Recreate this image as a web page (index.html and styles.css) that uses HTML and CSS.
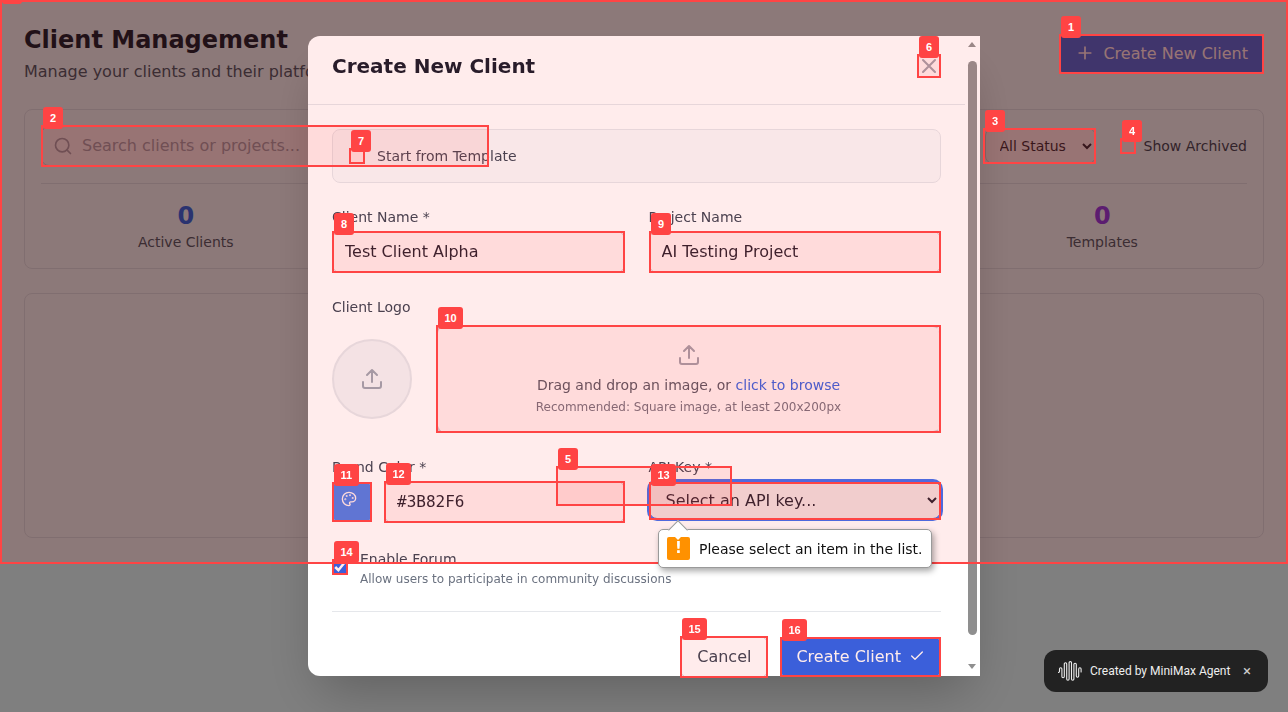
FILE: index.html

```html
<!DOCTYPE html>
<html lang="en">
<head>
  <meta charset="UTF-8">
  <meta name="viewport" content="width=device-width, initial-scale=1.0">
  <title>Client Management</title>
  <link rel="stylesheet" href="styles.css">
</head>
<body>

  <main class="page">
    <header class="page-header">
      <div>
        <h1>Client Management</h1>
        <p class="subtitle">Manage your clients and their platforms</p>
      </div>
      <button class="btn btn-primary">
        <svg class="icon" width="20" height="20" viewBox="0 0 24 24"><path d="M12 5v14M5 12h14"/></svg>
        Create New Client
      </button>
    </header>

    <section class="card">
      <div class="filters">
        <div class="search">
          <svg class="icon search-icon" width="20" height="20" viewBox="0 0 24 24"><circle cx="11" cy="11" r="8"/><path d="M21 21l-4.35-4.35"/></svg>
          <input class="search-input" type="text" placeholder="Search clients or projects...">
        </div>
        <select class="status-select"><option>All Status</option></select>
        <label class="archived"><input class="check" type="checkbox"> Show Archived</label>
      </div>
      <div class="stats">
        <div class="stat"><div class="stat-num blue">0</div><div class="stat-label">Active Clients</div></div>
        <div class="stat"></div>
        <div class="stat"></div>
        <div class="stat"><div class="stat-num purple">0</div><div class="stat-label">Templates</div></div>
      </div>
    </section>

    <section class="card list-card"></section>
  </main>

  <div class="backdrop">
    <div class="modal">
      <div class="modal-content">
        <div class="modal-header">
          <h2>Create New Client</h2>
          <button class="close-btn">
            <svg class="icon" width="24" height="24" viewBox="0 0 24 24"><path d="M18 6L6 18M6 6l12 12"/></svg>
          </button>
        </div>

        <form class="modal-body">
          <label class="template-box"><input class="check" type="checkbox"> Start from Template</label>

          <div class="two-col">
            <div>
              <label class="field-label">Client Name *</label>
              <input class="text-input" type="text" value="Test Client Alpha">
            </div>
            <div>
              <label class="field-label">Project Name</label>
              <input class="text-input" type="text" value="AI Testing Project">
            </div>
          </div>

          <div class="logo-field">
            <label class="field-label">Client Logo</label>
            <div class="logo-row">
              <div class="logo-circle">
                <svg class="icon" width="24" height="24" viewBox="0 0 24 24"><path d="M21 15v4a2 2 0 0 1-2 2H5a2 2 0 0 1-2-2v-4M17 8l-5-5-5 5M12 3v12"/></svg>
              </div>
              <div class="dropzone">
                <svg class="icon" width="24" height="24" viewBox="0 0 24 24"><path d="M21 15v4a2 2 0 0 1-2 2H5a2 2 0 0 1-2-2v-4M17 8l-5-5-5 5M12 3v12"/></svg>
                <p class="drop-text">Drag and drop an image, or <span class="link">click to browse</span></p>
                <p class="drop-hint">Recommended: Square image, at least 200x200px</p>
              </div>
            </div>
          </div>

          <div class="two-col">
            <div>
              <label class="field-label">Brand Color *</label>
              <div class="color-row">
                <div class="swatch">
                  <svg class="icon" width="16" height="16" viewBox="0 0 24 24">
                    <circle cx="13.5" cy="6.5" r=".5"/><circle cx="17.5" cy="10.5" r=".5"/><circle cx="8.5" cy="7.5" r=".5"/><circle cx="6.5" cy="12.5" r=".5"/>
                    <path d="M12 2C6.5 2 2 6.5 2 12s4.5 10 10 10c.926 0 1.648-.746 1.648-1.688 0-.437-.18-.835-.437-1.125-.29-.289-.438-.652-.438-1.125a1.64 1.64 0 0 1 1.668-1.668h1.996c3.051 0 5.555-2.503 5.555-5.554C21.965 6.012 17.461 2 12 2z"/>
                  </svg>
                </div>
                <input class="text-input color-input" type="text" value="#3B82F6">
              </div>
            </div>
            <div>
              <label class="field-label">API Key *</label>
              <select class="api-select"><option>Select an API key...</option></select>
            </div>
          </div>

          <div class="forum-row">
            <input class="check" type="checkbox" checked>
            <div>
              <div class="forum-title">Enable Forum</div>
              <div class="forum-desc">Allow users to participate in community discussions</div>
            </div>
          </div>

          <div class="modal-footer">
            <button class="btn btn-cancel" type="button">Cancel</button>
            <button class="btn btn-create" type="button">
              Create Client
              <svg class="icon" width="16" height="16" viewBox="0 0 24 24"><path d="M20 6L9 17l-5-5"/></svg>
            </button>
          </div>
        </form>
      </div>

      <div class="scrollbar">
        <span class="arrow-up"></span>
        <span class="thumb"></span>
        <span class="arrow-down"></span>
      </div>
    </div>
  </div>

  <!-- numbered boxes drawn over the page -->
  <div class="marks">
    <div class="mark m0"><span class="tag">0</span></div>
    <div class="mark m1"><span class="tag">1</span></div>
    <div class="mark m2"><span class="tag">2</span></div>
    <div class="mark m3"><span class="tag">3</span></div>
    <div class="mark m4"><span class="tag">4</span></div>
    <div class="mark m5"><span class="tag">5</span></div>
    <div class="mark m6"><span class="tag">6</span></div>
    <div class="mark m7"><span class="tag">7</span></div>
    <div class="mark m8"><span class="tag">8</span></div>
    <div class="mark m9"><span class="tag">9</span></div>
    <div class="mark m10"><span class="tag">10</span></div>
    <div class="mark m11"><span class="tag">11</span></div>
    <div class="mark m12"><span class="tag">12</span></div>
    <div class="mark m13"><span class="tag">13</span></div>
    <div class="mark m14"><span class="tag">14</span></div>
    <div class="mark m15"><span class="tag">15</span></div>
    <div class="mark m16"><span class="tag">16</span></div>
  </div>

  <div class="bubble">
    <span class="bubble-icon">!</span>
    Please select an item in the list.
  </div>

  <div class="toast">
    <svg class="wave" width="24" height="20" viewBox="0 0 24 20"><path d="M.3 11.500c.8 0 1.200-.4 1.200-1.200V8a1.200 1.200 0 0 1 2.400 0v7.500a1.200 1.200 0 0 0 2.400 0V3a1.200 1.200 0 0 1 2.400 0v15a1.200 1.200 0 0 0 2.400 0V1.800a1.200 1.200 0 0 1 2.400 0V18a1.200 1.200 0 0 0 2.400 0V3.500a1.200 1.200 0 0 1 2.400 0V15a1.200 1.200 0 0 0 2.400 0V8a1.200 1.200 0 0 1 2.400 0v3"/></svg>
    <span class="toast-text">Created by MiniMax Agent</span>
    <span class="toast-close">&#215;</span>
  </div>

</body>
</html>
```

FILE: styles.css

```css
* {
  box-sizing: border-box;
}
body {
  margin: 0;
  height: 712px;
  overflow: hidden;
  background: #fff;
  font-family: "DejaVu Sans", sans-serif;
  color: #111827;
}
h1, h2, p {
  margin: 0;
}
.icon {
  fill: none;
  stroke: currentColor;
  stroke-width: 2;
  stroke-linecap: round;
  stroke-linejoin: round;
  flex: none;
}
.check {
  width: 16px;
  height: 16px;
  margin: 0;
  flex: none;
  accent-color: #2563eb;
}

/* page behind the modal */
.page {
  padding: 24px;
}
.page-header {
  display: flex;
  justify-content: space-between;
  align-items: center;
  margin-bottom: 25px;
}
h1 {
  font-size: 24px;
  line-height: 32px;
  font-weight: 700;
}
.subtitle {
  margin-top: 4px;
  font-size: 16px;
  line-height: 24px;
  color: #4b5563;
}
.btn {
  display: flex;
  align-items: center;
  gap: 8px;
  height: 40px;
  padding: 0 16px 2px;
  border: none;
  border-radius: 8px;
  font-family: inherit;
  font-size: 16px;
}
.btn-primary {
  background: #2563eb;
  color: #fff;
}
.card {
  border: 1px solid #e5e7eb;
  border-radius: 8px;
  background: #fff;
  padding: 16px;
}
.filters {
  display: flex;
  align-items: center;
  gap: 24px;
  padding-bottom: 17px;
  border-bottom: 1px solid #e5e7eb;
}
.search {
  position: relative;
  width: 448px;
  margin-right: auto;
}
.search-icon {
  position: absolute;
  left: 12px;
  top: 10px;
  color: #9ca3af;
}
.search-input {
  display: block;
  width: 100%;
  height: 40px;
  padding: 0 12px 2px 40px;
  border: 1px solid #d1d5db;
  border-radius: 8px;
  font-family: inherit;
  font-size: 16px;
}
.search-input::placeholder {
  color: #9ca3af;
}
.status-select {
  width: 111px;
  height: 36px;
  padding: 0 8px 0 10px;
  border: 1px solid #d1d5db;
  border-radius: 8px;
  background: #fff;
  font-family: inherit;
  font-size: 14px;
  color: #111827;
}
.archived {
  display: flex;
  align-items: center;
  gap: 8px;
  font-size: 14px;
  color: #374151;
}
.stats {
  display: grid;
  grid-template-columns: repeat(4, 1fr);
  gap: 16px;
  padding-top: 16px;
  text-align: center;
}
.stat-num {
  font-size: 24px;
  line-height: 32px;
  font-weight: 700;
}
.blue {
  color: #2563eb;
}
.purple {
  color: #9333ea;
}
.stat-label {
  font-size: 14px;
  line-height: 20px;
  color: #4b5563;
}
.list-card {
  height: 245px;
  margin-top: 24px;
}

/* modal */
.backdrop {
  position: fixed;
  inset: 0;
  display: flex;
  align-items: center;
  justify-content: center;
  background: rgba(0, 0, 0, 0.5);
}
.modal {
  display: flex;
  width: 672px;
  height: 640px;
  overflow: hidden;
  border-radius: 12px 0 0 12px;
  background: #fff;
  box-shadow: 0 25px 50px -12px rgba(0, 0, 0, 0.25);
}
.modal-content {
  flex: 1;
  min-width: 0;
}
.modal-header {
  display: flex;
  justify-content: space-between;
  align-items: center;
  height: 69px;
  padding: 16px 24px 24px;
  border-bottom: 1px solid #e5e7eb;
}
.modal-header h2 {
  font-size: 20px;
  line-height: 28px;
  font-weight: 700;
}
.close-btn {
  display: flex;
  width: 24px;
  height: 24px;
  padding: 0;
  border: none;
  background: none;
  color: #9ca3af;
}
.modal-body {
  padding: 24px;
}
.template-box {
  display: flex;
  align-items: center;
  gap: 12px;
  height: 54px;
  padding: 0 16px;
  border: 1px solid #e5e7eb;
  border-radius: 8px;
  background: #f9fafb;
  font-size: 14px;
  color: #374151;
}
.two-col {
  display: grid;
  grid-template-columns: 1fr 1fr;
  gap: 24px;
  margin-top: 24px;
}
.field-label {
  display: block;
  margin-bottom: 4px;
  font-size: 14px;
  line-height: 20px;
  color: #374151;
}
.text-input {
  display: block;
  width: 100%;
  height: 42px;
  padding: 0 12px 2px;
  border: 1px solid #d1d5db;
  border-radius: 8px;
  font-family: inherit;
  font-size: 16px;
  color: #111827;
}
.logo-field {
  margin-top: 24px;
}
.logo-row {
  display: flex;
  align-items: center;
  gap: 24px;
  margin-top: 8px;
}
.logo-circle {
  display: flex;
  align-items: center;
  justify-content: center;
  width: 80px;
  height: 80px;
  flex: none;
  border: 2px solid #e5e7eb;
  border-radius: 50%;
  background: #f3f4f6;
  color: #9ca3af;
}
.dropzone {
  flex: 1;
  display: flex;
  flex-direction: column;
  align-items: center;
  padding: 16px;
  border: 2px dashed #d1d5db;
  border-radius: 8px;
  color: #9ca3af;
}
.drop-text {
  margin-top: 8px;
  font-size: 14px;
  line-height: 20px;
  color: #4b5563;
}
.link {
  color: #2563eb;
}
.drop-hint {
  margin-top: 4px;
  font-size: 12px;
  line-height: 16px;
  color: #6b7280;
}
.color-row {
  display: flex;
  align-items: center;
  gap: 12px;
}
.swatch {
  width: 40px;
  height: 40px;
  flex: none;
  padding: 9px;
  border-radius: 8px;
  background: #3b82f6;
  color: #fff;
}
.swatch .icon {
  display: block;
}
.color-input {
  flex: 1;
  width: auto;
  min-width: 0;
  font-family: "DejaVu Sans Mono", monospace;
}
.api-select {
  display: block;
  width: 100%;
  height: 38px;
  margin-top: 1px;
  padding: 0 12px;
  border: 1px solid #3b6ff0;
  border-radius: 8px;
  box-shadow: 0 0 0 2px #3b6ff0;
  background: #efefef;
  font-family: inherit;
  font-size: 16px;
  color: #111827;
}
.forum-row {
  display: flex;
  align-items: center;
  gap: 12px;
  margin-top: 26px;
}
.forum-row .check {
  margin-top: -4px;
}
.forum-title {
  font-size: 14px;
  line-height: 20px;
  color: #374151;
}
.forum-desc {
  font-size: 12px;
  line-height: 20px;
  color: #6b7280;
}
.modal-footer {
  display: flex;
  justify-content: flex-end;
  align-items: center;
  gap: 12px;
  margin-top: 22px;
  padding-top: 24px;
  border-top: 1px solid #e5e7eb;
}
.btn-cancel {
  height: 42px;
  border: 1px solid #d1d5db;
  background: #fff;
  color: #374151;
}
.btn-create {
  background: #2563eb;
  color: #fff;
}

/* fake native scrollbar */
.scrollbar {
  position: relative;
  width: 15px;
  flex: none;
  background: #fff;
}
.thumb {
  position: absolute;
  left: 3px;
  top: 25px;
  width: 9px;
  height: 574px;
  border-radius: 5px;
  background: #8f8f8f;
}
.arrow-up,
.arrow-down {
  position: absolute;
  left: 3px;
  width: 0;
  height: 0;
  border-left: 4.5px solid transparent;
  border-right: 4.5px solid transparent;
}
.arrow-up {
  top: 6px;
  border-bottom: 5px solid #8f8f8f;
}
.arrow-down {
  bottom: 7px;
  border-top: 5px solid #8f8f8f;
}

/* numbered boxes */
.marks {
  position: fixed;
  inset: 0;
  overflow: hidden;
}
.mark {
  position: absolute;
  border: 2px solid #ff4444;
  background: rgba(255, 68, 68, 0.1);
}
.tag {
  position: absolute;
  left: 0;
  top: -20px;
  min-width: 20px;
  height: 22px;
  padding: 0 6.5px;
  border-radius: 3px;
  background: #ff4444;
  color: #fff;
  font-family: "Liberation Sans", sans-serif;
  font-size: 11px;
  font-weight: 700;
  line-height: 22px;
  text-align: center;
}
.m0 { left: 0; top: 0; width: 1288px; height: 564px; }
.m1 { left: 1059px; top: 34px; width: 205px; height: 40px; }
.m2 { left: 41px; top: 125px; width: 448px; height: 42px; }
.m3 { left: 983px; top: 128px; width: 113px; height: 36px; }
.m4 { left: 1120px; top: 138px; width: 16px; height: 16px; }
.m5 { left: 556px; top: 466px; width: 176px; height: 40px; }
.m6 { left: 917px; top: 54px; width: 24px; height: 24px; }
.m7 { left: 349px; top: 148px; width: 16px; height: 16px; }
.m8 { left: 332px; top: 231px; width: 293px; height: 42px; }
.m9 { left: 649px; top: 231px; width: 292px; height: 42px; }
.m10 { left: 436px; top: 325px; width: 505px; height: 108px; }
.m11 { left: 332px; top: 482px; width: 40px; height: 40px; }
.m12 { left: 384px; top: 481px; width: 241px; height: 42px; }
.m13 { left: 649px; top: 482px; width: 292px; height: 38px; }
.m14 { left: 332px; top: 559px; width: 16px; height: 16px; }
.m15 { left: 680px; top: 636px; width: 88px; height: 42px; }
.m16 { left: 780px; top: 637px; width: 161px; height: 40px; }

/* browser validation bubble */
.bubble {
  position: fixed;
  left: 658px;
  top: 529px;
  display: flex;
  align-items: center;
  gap: 9px;
  width: 274px;
  height: 39px;
  padding: 0 8px;
  border: 1px solid #9a9a9a;
  border-radius: 5px;
  background: #fff;
  box-shadow: 2px 3px 6px rgba(0, 0, 0, 0.35);
  font-size: 14px;
  color: #111;
}
.bubble::before {
  content: "";
  position: absolute;
  left: 12px;
  top: -7px;
  width: 13px;
  height: 13px;
  border-top: 1px solid #9a9a9a;
  border-left: 1px solid #9a9a9a;
  background: #fff;
  transform: rotate(45deg);
}
.bubble-icon {
  width: 23px;
  height: 23px;
  flex: none;
  border-radius: 2px;
  background: #ff9100;
  color: #fff;
  font-size: 15px;
  font-weight: 700;
  line-height: 23px;
  text-align: center;
}

/* badge bottom right */
.toast {
  position: fixed;
  right: 20px;
  bottom: 20px;
  display: flex;
  align-items: center;
  width: 224px;
  height: 42px;
  padding: 0 17px 0 14px;
  border-radius: 12px;
  background: #222;
  color: #eee;
  font-family: Roboto, sans-serif;
  font-size: 12px;
}
.wave {
  flex: none;
  fill: none;
  stroke: #eee;
  stroke-width: 1.1;
  stroke-linecap: round;
}
.toast-text {
  margin-left: 8px;
}
.toast-close {
  margin-left: auto;
  font-size: 15px;
  color: #ccc;
}
```
